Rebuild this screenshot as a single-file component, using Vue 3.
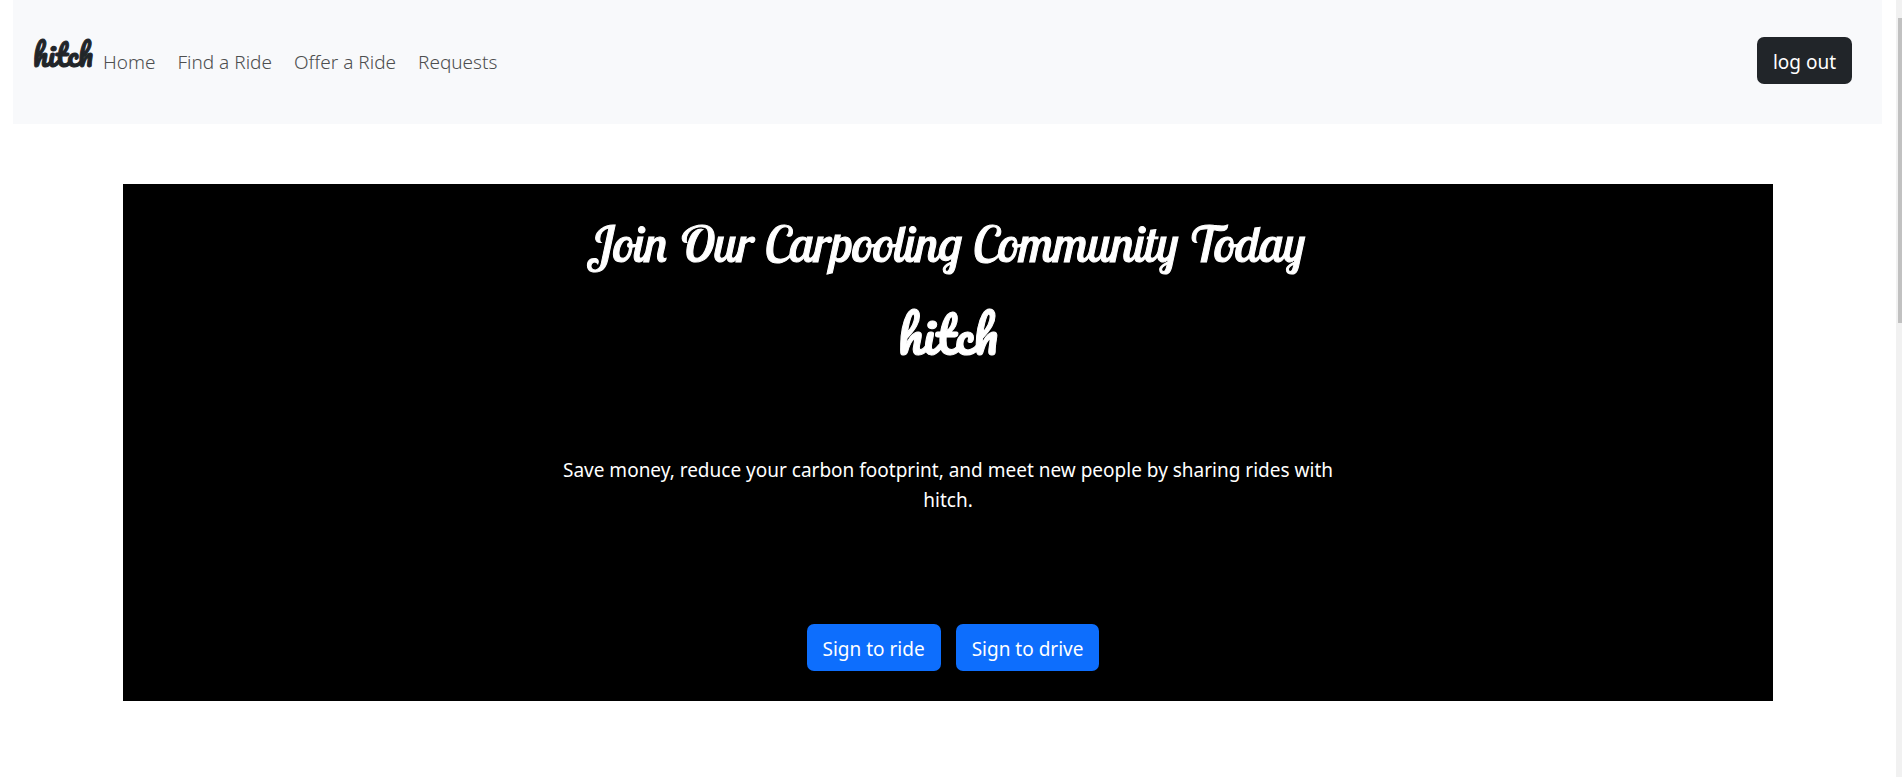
<script setup>
const links = ['Home', 'Find a Ride', 'Offer a Ride', 'Requests']
const actions = ['Sign to ride', 'Sign to drive']
</script>

<template>
  <div class="page">
    <div class="content">
      <header class="navbar">
        <a class="brand" href="#">hitch</a>
        <nav class="links">
          <a v-for="link in links" :key="link" href="#">{{ link }}</a>
        </nav>
        <button class="btn btn-dark" type="button">log out</button>
      </header>
      <main class="hero">
        <h1>Join Our Carpooling Community Today</h1>
        <h2>hitch</h2>
        <p>Save money, reduce your carbon footprint, and meet new people by sharing rides with hitch.</p>
        <div class="actions">
          <button v-for="action in actions" :key="action" class="btn btn-primary" type="button">{{ action }}</button>
        </div>
      </main>
    </div>
    <div class="scrollbar" aria-hidden="true"><div class="thumb"></div></div>
  </div>
</template>

<style>
body {
  margin: 0;
  background: #fff;
}
</style>

<style scoped>
.page {
  display: flex;
  min-height: 100vh;
  font-family: "Segoe UI", "Noto Sans", sans-serif;
  font-size: 19px;
  line-height: 30px;
}
.content {
  flex: 1;
  padding: 0 14px 0 13px;
}
.navbar {
  display: flex;
  align-items: flex-start;
  box-sizing: border-box;
  min-height: 124px;
  padding: 37px 30px 37px 20px;
  background: #f8f9fb;
}
.brand {
  margin-right: 10px;
  color: #212529;
  font: 400 30px/36px Pacifico, "Liberation Serif", serif;
  text-decoration: none;
  -webkit-text-stroke: 1px currentColor;
}
.links {
  display: flex;
  flex: 1;
  gap: 22px;
  padding-top: 10px;
}
.links a {
  color: #4d4e4f;
  font-weight: 300;
  text-decoration: none;
}
.btn {
  height: 47px;
  padding: 2px 16px 0;
  border: 0;
  border-radius: 7px;
  color: #fff;
  font: inherit;
}
.btn-dark {
  background: #212529;
}
.btn-primary {
  background: #0d6efd;
}
.hero {
  display: flex;
  flex-direction: column;
  align-items: center;
  margin: 60px 109px 0 110px;
  padding: 30px;
  background: #000;
  color: #fff;
  text-align: center;
}
h1 {
  margin: 0 0 30px;
  font: italic 400 50px/60px "Lobster Two", Lobster, "Liberation Serif", serif;
  -webkit-text-stroke: 1px currentColor;
}
h2 {
  margin: 0 0 91px;
  font: 500 50px/60px Pacifico, "Liberation Serif", serif;
  -webkit-text-stroke: 1px currentColor;
}
p {
  max-width: 780px;
  margin: 0 0 109px;
}
.actions {
  display: flex;
  gap: 15px;
  padding-left: 10px;
}
.scrollbar {
  width: 6px;
  padding: 18px 0 0 2px;
  box-sizing: border-box;
  background: #f1f1f1;
}
.thumb {
  height: 305px;
  background: #c1c1c1;
}
</style>
